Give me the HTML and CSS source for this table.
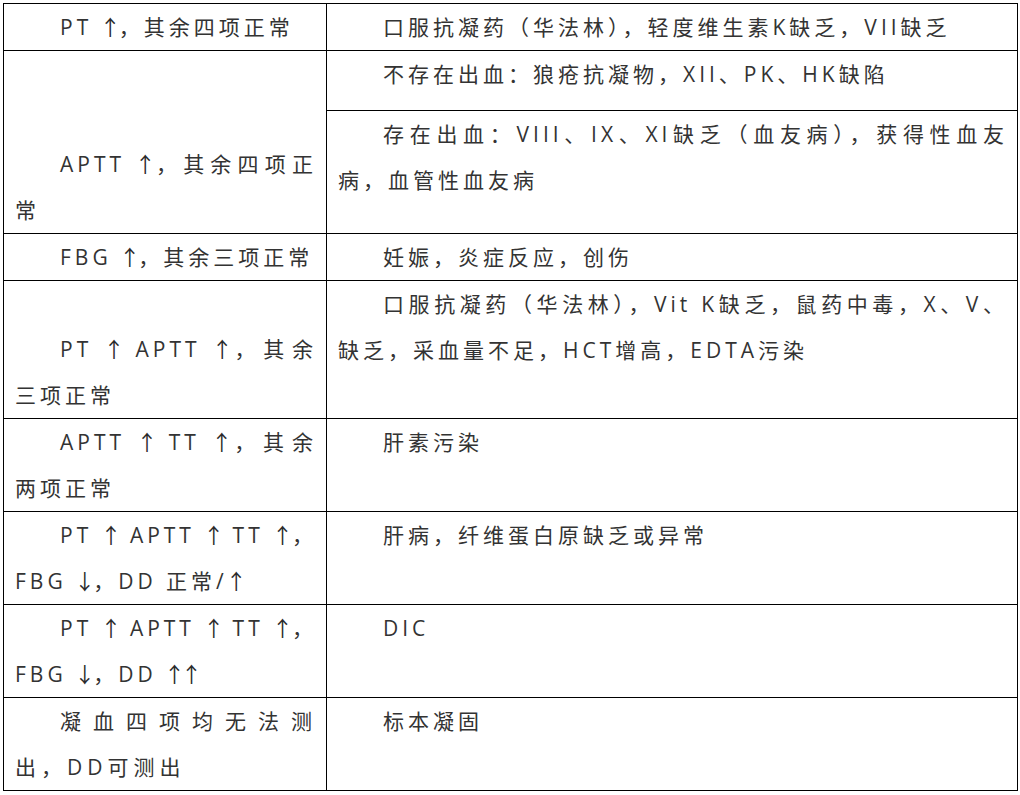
FILE: index.html
```html
<!DOCTYPE html>
<html lang="zh-CN">
<head>
<meta charset="utf-8">
<title>凝血四项</title>
<link rel="stylesheet" href="styles.css">
</head>
<body>
<div class="page">
<table class="coag">
  <colgroup><col class="c1"><col class="c2"></colgroup>
  <tr class="r47">
    <td class="cond">PT <span class="arr">↑</span>，其余四项正常</td>
    <td class="cause">口服抗凝药（华法林），轻度维生素K缺乏，VII缺乏</td>
  </tr>
  <tr class="r60">
    <td class="cond" rowspan="2">APTT <span class="arr">↑</span>，其余四项正常</td>
    <td class="cause">不存在出血：狼疮抗凝物，XII、PK、HK缺陷</td>
  </tr>
  <tr class="r123">
    <td class="cause">存在出血：VIII、IX、XI缺乏（血友病），获得性血友病，血管性血友病</td>
  </tr>
  <tr class="r47">
    <td class="cond">FBG <span class="arr">↑</span>，其余三项正常</td>
    <td class="cause">妊娠，炎症反应，创伤</td>
  </tr>
  <tr class="r138">
    <td class="cond">PT <span class="arr">↑</span> APTT <span class="arr">↑</span>，其余三项正常</td>
    <td class="cause">口服抗凝药（华法林），Vit K缺乏，鼠药中毒，X、V、缺乏，采血量不足，HCT增高，EDTA污染</td>
  </tr>
  <tr class="r93">
    <td class="cond">APTT <span class="arr">↑</span> TT <span class="arr">↑</span>，其余两项正常</td>
    <td class="cause">肝素污染</td>
  </tr>
  <tr class="r93">
    <td class="cond">PT <span class="arr">↑</span> APTT <span class="arr">↑</span> TT <span class="arr">↑</span>，FBG <span class="arr">↓</span>，DD 正常/<span class="arr">↑</span></td>
    <td class="cause">肝病，纤维蛋白原缺乏或异常</td>
  </tr>
  <tr class="r93">
    <td class="cond">PT <span class="arr">↑</span> APTT <span class="arr">↑</span> TT <span class="arr">↑</span>，FBG <span class="arr">↓</span>，DD <span class="arr">↑</span><span class="arr">↑</span></td>
    <td class="cause">DIC</td>
  </tr>
  <tr class="r93">
    <td class="cond wide">凝血四项均无法测出，DD可测出</td>
    <td class="cause">标本凝固</td>
  </tr>
</table>
</div>
</body>
</html>
```

FILE: styles.css
```css
html, body {
  margin: 0;
  padding: 0;
  background: #ffffff;
}

.page {
  padding: 3px 0 0 3px;
}

.coag {
  border-collapse: collapse;
  table-layout: fixed;
  width: 1014px;
  font-family: "Open Sans", "Noto Sans CJK SC", sans-serif;
  font-size: 21px;
  line-height: 46px;
  letter-spacing: 4px;
  color: #333333;
}

.c1 { width: 323px; }
.c2 { width: 691px; }

.coag td {
  border: 1px solid #000000;
  padding: 0 9px 0 11px;
  text-align: justify;
  text-indent: 45px;
  overflow: hidden;
}

.coag td.cond {
  vertical-align: bottom;
}

.coag td.cause {
  vertical-align: top;
}

.coag td.wide {
  letter-spacing: 5px;
}

.arr {
  font-family: "Noto Sans CJK SC", sans-serif;
  line-height: 1;
  margin-left: -2px;
  letter-spacing: -2px;
  color: #2a2a2a;
}

.r47 { height: 47px; }
.r60 { height: 60px; }
.r123 { height: 123px; }
.r138 { height: 138px; }
.r93 { height: 93px; }
```
